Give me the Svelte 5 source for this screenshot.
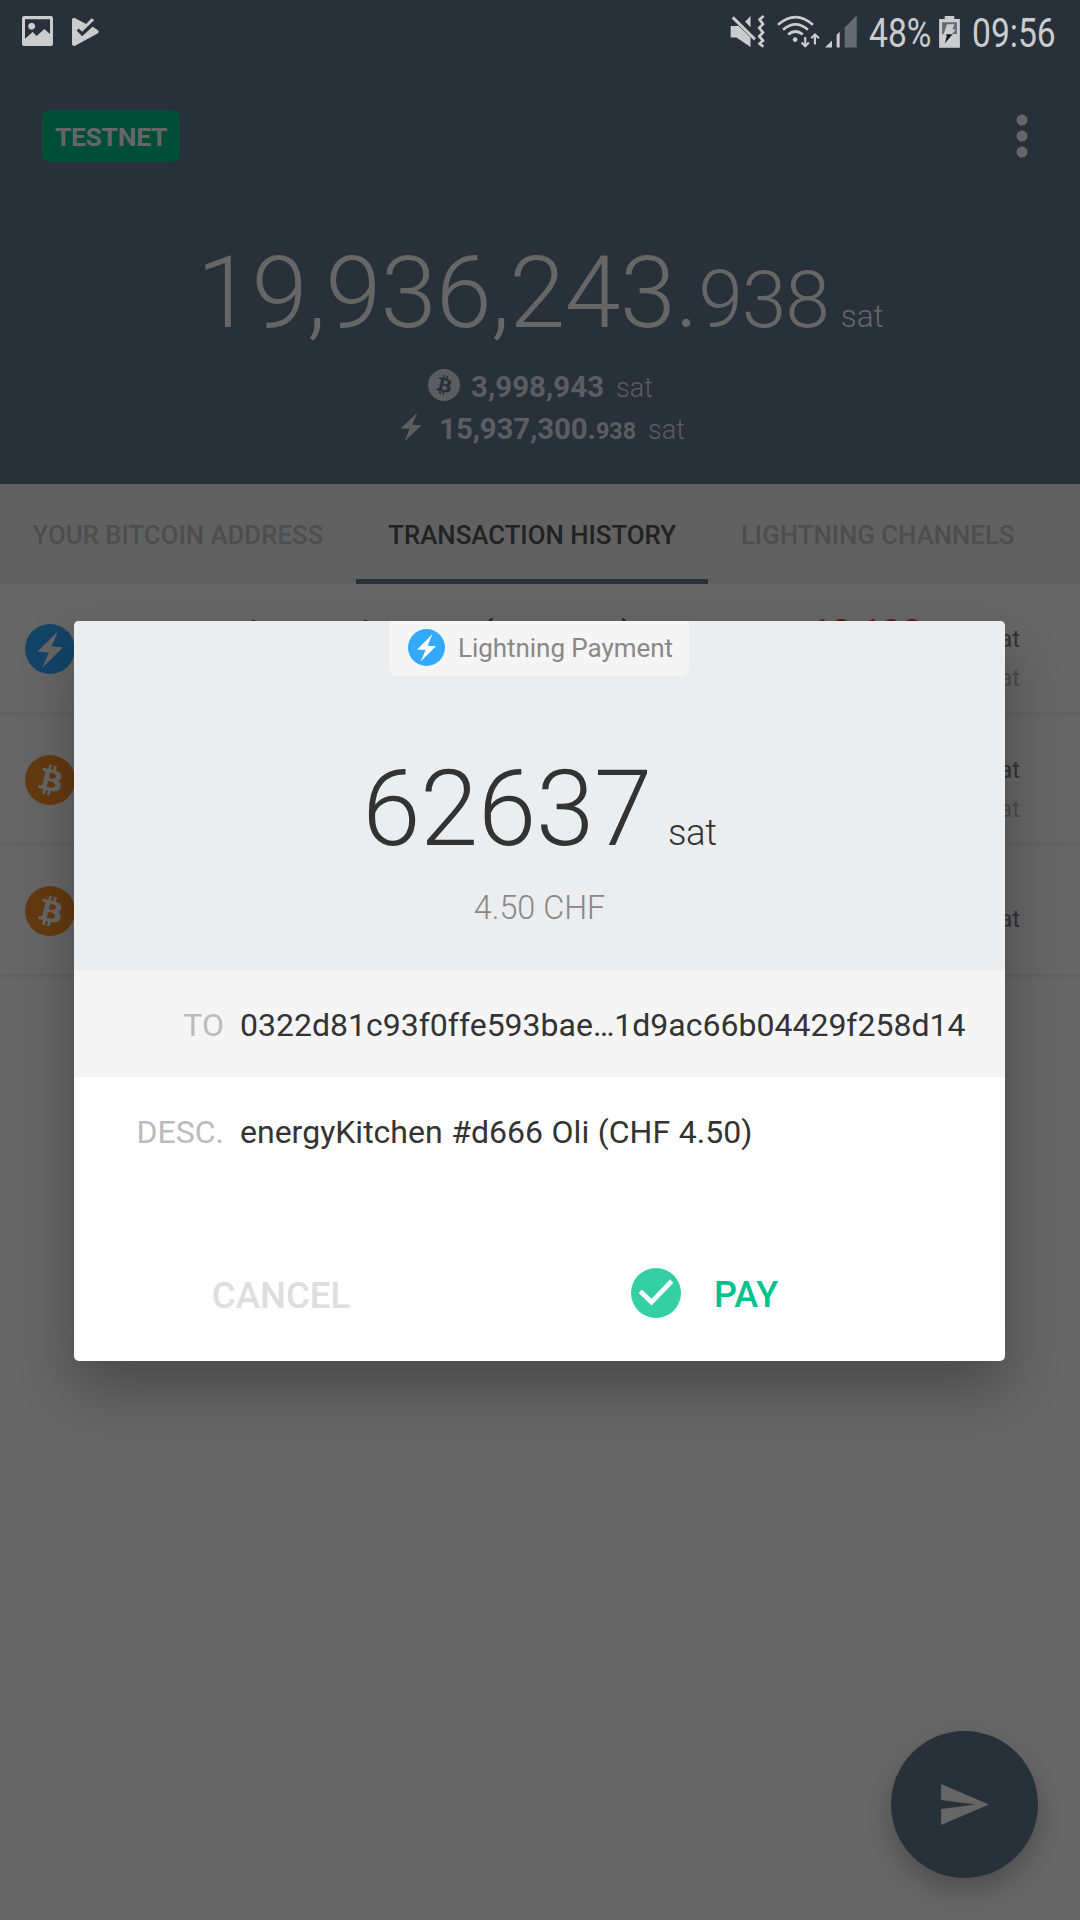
<script>
  const tabs = [
    { label: 'YOUR BITCOIN ADDRESS', active: false },
    { label: 'TRANSACTION HISTORY', active: true },
    { label: 'LIGHTNING CHANNELS', active: false },
  ];
  const transactions = [
    { kind: 'bolt', title: 'energyKitchen #e5b2 Marc (CHF 4.50)', amount: '12,100', fee: true },
    { kind: 'coin', title: '', amount: '', fee: true },
    { kind: 'coin', title: '', amount: '', fee: false },
  ];
  const details = [
    { label: 'TO', value: '0322d81c93f0ffe593bae…1d9ac66b04429f258d14' },
    { label: 'DESC.', value: 'energyKitchen #d666 Oli (CHF 4.50)' },
  ];
  const coin =
    'M23.189 14.02c.314-2.096-1.283-3.223-3.465-3.975l.708-2.84-1.728-.43-.69 2.765c-.454-.114-.92-.22-1.385-.326l.695-2.783L15.596 6l-.708 2.839c-.376-.086-.746-.17-1.104-.26l.002-.009-2.384-.595-.46 1.846s1.283.294 1.256.312c.7.175.826.638.805 1.006l-.806 3.235c.048.012.11.03.18.057l-.183-.045-1.13 4.532c-.086.212-.303.531-.793.41.018.025-1.256-.313-1.256-.313l-.858 1.978 2.25.561c.418.105.828.215 1.231.318l-.715 2.872 1.727.43.708-2.84c.472.127.93.245 1.378.357l-.706 2.828 1.728.43.715-2.866c2.948.558 5.164.333 6.097-2.333.752-2.146-.037-3.385-1.588-4.192 1.13-.26 1.98-1.003 2.207-2.538zm-3.95 5.538c-.533 2.147-4.148.986-5.32.695l.95-3.805c1.172.293 4.929.872 4.37 3.11zm.535-5.569c-.487 1.953-3.495.96-4.47.717l.86-3.45c.975.243 4.118.696 3.61 2.733z';
  const bolt = 'M21.1 4.6L17 14.4l7.2.5L11 28.1l4.2-9.9-7.3-.5z';
</script>

<div class="screen">
  <header>
    <div class="status">
      <svg class="s-img" viewBox="66 48 93 90"><path fill-rule="evenodd" d="M72 48h81q6 0 6 6v78q0 6-6 6H72q-6 0-6-6V54q0-6 6-6zM75 58v58l23-20 12 12 23-21 17 15V58zM95 68a10.500 10.500 0 1 1-.1 0z" /></svg>
      <svg class="s-play" viewBox="216 50 80 86"><path d="M216 57q2-6 8-4l34 18 16-17 8 5-36 35-10-10-6 6 16 17 31-28 16 10q5 4 0 9l-68 37q-7 3-9-4z" /></svg>
      <span class="grow"></span>
      <svg class="s-mute" viewBox="86 46 104 98">
        <path d="M88 79h18l5-1 36 35v28l-42-28H88zM147 49v33l-16-16z" />
        <path d="M94 53l66 65" stroke="#cbccce" stroke-width="9" />
        <path d="M186 49l-12 10 10 14-11 11 11 14-11 11 11 13-10 9 11 9" fill="none" stroke="#cbccce" stroke-width="8" />
      </svg>
      <svg class="s-wifi" viewBox="230 44 128 98" fill="none" stroke="#cbccce" stroke-width="8">
        <path d="M233 73q52-46 104 0M248 88q37-32 74 0M263 102q22-18 44 0" />
        <circle cx="284" cy="117" r="7" fill="#cbccce" stroke="none" />
        <path d="M314 109v26M303 126l11 11 11-11M343 132v-28M332 113l11-11 12 11" stroke-width="6.500" />
      </svg>
      <svg class="s-signal" viewBox="373 46 96 98"><path d="M373 143l21-21v21zM408 105l9-9v47h-9z" /><path d="M432 83l36-36v96h-36z" fill="#666b73" /></svg>
      <span class="cond pct"><b>48%</b></span>
      <svg class="s-bat" viewBox="717 47 63 97"><path d="M734 47h29v9h17v87h-63V56h17z" /><path d="M726 66h45v36h-45z" fill="#666b73" /><path d="M741 72h22l-5 16h10l-14 16h-24z" /><path d="M738 102h20l-24 28 6-21z" fill="#1b1f25" /></svg>
      <span class="cond time"><b>09:56</b></span>
    </div>
    <div class="toolbar">
      <span class="net">TESTNET</span>
      <svg class="menu" viewBox="0 0 12 44"><circle cx="6" cy="6" r="5.500" /><circle cx="6" cy="22" r="5.500" /><circle cx="6" cy="38" r="5.500" /></svg>
    </div>
    <div class="balance">19,936,243.<span class="milli">938</span><span class="unit">sat</span></div>
    <div class="sub">
      <svg class="sub-coin" viewBox="0 0 32 32"><circle cx="16" cy="16" r="16" /><path d={coin} fill="#283039" /></svg>
      <strong>3,998,943</strong><span>sat</span>
    </div>
    <div class="sub second">
      <svg class="sub-bolt" viewBox="0 0 22 30"><path d="M17.500 .5L12.200 12.800l9.600.4L4.500 29.500l5.100-12.700L.5 16.500z" /></svg>
      <strong>15,937,300.<small>938</small></strong><span>sat</span>
    </div>
  </header>

  <nav>
    {#each tabs as tab}
      <div class="tab" class:active={tab.active}>{tab.label}</div>
    {/each}
  </nav>

  <main>
    {#each transactions as tx}
      <div class="tx">
        <svg class="tx-icon" viewBox="0 0 32 32">
          <circle cx="16" cy="16" r="16" fill={tx.kind === 'bolt' ? '#144467' : '#633a11'} />
          <path d={tx.kind === 'bolt' ? bolt : coin} fill="#666" />
        </svg>
        <div class="tx-title">{tx.title}</div>
        <div class="tx-right">
          <div class="tx-amount"><em>{tx.amount}</em>sat</div>
          {#if tx.fee}<div class="tx-fee">sat</div>{/if}
        </div>
      </div>
    {/each}
  </main>

  <div class="fab"><svg viewBox="2 3 21 18"><path d="M2 21L23 12 2 3v7l15 2-15 2z" /></svg></div>

  <section class="dialog">
    <div class="head">
      <div class="type">
        <svg viewBox="0 0 32 32"><circle cx="16" cy="16" r="16" fill="#33aaff" /><path d={bolt} fill="#fff" /></svg>
        <span>Lightning Payment</span>
      </div>
      <div class="amount">62637<span>sat</span></div>
      <div class="fiat">4.50 CHF</div>
    </div>
    {#each details as row}
      <div class="detail"><span class="label">{row.label}</span><span class="value">{row.value}</span></div>
    {/each}
    <div class="actions">
      <div class="cancel">CANCEL</div>
      <div class="pay">
        <svg viewBox="0 0 50 50"><circle cx="25" cy="25" r="25" fill="#34cfa3" /><path d="M9.300 23.300L20.500 34.200 40.700 13.200" fill="none" stroke="#fff" stroke-width="4.700" /></svg>
        <span>PAY</span>
      </div>
    </div>
  </section>
</div>

<style>
  .screen {
    position: relative;
    width: 1080px;
    height: 1920px;
    overflow: hidden;
    background: #666;
    font-family: Roboto, 'Liberation Sans', sans-serif;
    color: #222;
  }
  svg { display: block; flex: none; }
  header { height: 484px; background: #283039; color: #666; }

  .status { display: flex; height: 60px; padding: 0 21px 0 22px; fill: #cbccce; color: #cbccce; }
  .status svg { overflow: visible; }
  .grow { flex: 1; }
  .s-img { width: 31px; height: 30px; margin-top: 16px; }
  .s-play { width: 27px; height: 29px; margin: 17px 0 0 19px; }
  .s-mute { width: 35px; height: 33px; margin-top: 15px; }
  .s-wifi { width: 43px; height: 33px; margin: 15px 0 0 12px; }
  .s-signal { width: 32px; height: 33px; margin: 15px 0 0 5px; }
  .s-bat { width: 21px; height: 32px; margin: 16px 0 0 8px; }
  .cond { font-size: 41px; line-height: 67px; }
  .cond b { display: block; font-weight: 400; transform: scaleX(.82); transform-origin: 0 0; white-space: nowrap; }
  .pct { width: 62px; margin-left: 12px; }
  .time { width: 87px; margin-left: 12px; }

  .toolbar { display: flex; align-items: center; justify-content: space-between; height: 152px; padding: 0 52px 0 42px; }
  .net { width: 138px; height: 52px; border-radius: 8px; background: #004d38; font-size: 26.500px; font-weight: 700; letter-spacing: -.3px; line-height: 53px; text-align: center; }
  .menu { width: 12px; height: 44px; fill: #666; }

  .balance { height: 120px; margin-top: 21px; font-size: 101px; font-weight: 300; letter-spacing: -.85px; line-height: 120px; text-align: center; white-space: nowrap; }
  .milli { font-size: 80.500px; letter-spacing: -1.1px; line-height: 0; }
  .unit { margin-left: 12px; font-size: 31.500px; letter-spacing: -.1px; line-height: 0; }
  .sub { display: flex; justify-content: center; height: 42px; margin-top: 13px; line-height: 42px; color: #5b5d61; fill: #5b5d61; }
  .second { margin-top: 0; padding-left: 5px; }
  .sub strong { font-size: 29.500px; font-weight: 700; }
  .second strong { letter-spacing: -.15px; }
  .sub small { font-size: 23.500px; line-height: 0; }
  .sub span { margin-left: 12px; font-size: 27px; font-weight: 300; line-height: 44px; }
  .sub-coin { width: 32px; height: 32px; margin: 3px 11px 0 1px; }
  .sub-bolt { width: 22px; height: 30px; margin: 4px 17px 0 0; }

  nav { display: flex; height: 100px; background: #616161; overflow: hidden; }
  .tab { box-sizing: border-box; flex: none; height: 100px; padding: 0 32.500px; border-bottom: 5px solid transparent; font-size: 25.800px; font-weight: 500; line-height: 102px; color: #4d4d4d; white-space: nowrap; }
  .active { border-color: #283039; color: #222; }

  .tx { box-sizing: border-box; display: flex; height: 131px; padding: 40px 60px 0 25px; border-bottom: 3px solid #616161; }
  .tx-icon { width: 50px; height: 50px; }
  .tx-title { flex: 1; margin: -8px 0 0 29px; font-size: 31.500px; letter-spacing: -.2px; line-height: 34px; color: #1c1c1c; white-space: nowrap; }
  .tx-right { margin-top: -4px; text-align: right; font-size: 23.500px; line-height: 39px; color: #333; }
  .tx-amount { height: 39px; }
  .tx-amount em { position: relative; top: -2px; margin-right: 65px; font-size: 36px; font-style: normal; font-weight: 700; line-height: 0; color: #6b0f14; }
  .tx-fee { color: #4b4b4b; }
  .tx:last-child .tx-right { margin-top: 14px; }

  .fab { position: absolute; left: 891px; top: 1731px; display: flex; width: 147px; height: 147px; border-radius: 50%; background: #283039; box-shadow: 0 12px 26px rgba(0, 0, 0, .24); }
  .fab svg { width: 48px; height: 41px; margin: 53px 0 0 50px; fill: #666; }

  .dialog { position: absolute; left: 74px; top: 621px; width: 931px; height: 740px; border-radius: 5px; overflow: hidden; background: #fff; box-shadow: 0 28px 56px rgba(0, 0, 0, .28); color: #333; }
  .head { height: 349px; background: #ebedee; }
  .type { display: flex; width: 300px; height: 55px; margin-left: 315px; border-radius: 0 0 8px 8px; background: #f5f5f5; font-size: 26px; letter-spacing: -.05px; line-height: 55px; color: #888; }
  .type svg { width: 37px; height: 37px; margin: 8px 13px 0 19px; }
  .amount { height: 120px; margin-top: 74px; font-size: 105px; font-weight: 300; letter-spacing: -.3px; line-height: 120px; text-align: center; }
  .amount span { margin-left: 16px; font-size: 36.500px; line-height: 0; }
  .fiat { margin-top: 18px; font-size: 32.300px; font-weight: 300; line-height: 40px; text-align: center; color: #888; }
  .detail { display: flex; height: 107px; font-size: 32px; line-height: 110px; white-space: nowrap; word-spacing: .7px; }
  .detail:nth-child(2) { background: #f5f5f5; }
  .label { width: 150px; margin-right: 16px; text-align: right; color: #bbb; }
  .actions { display: flex; height: 132px; margin-top: 45px; font-size: 36px; font-weight: 500; line-height: 132px; }
  .cancel { width: 414px; font-size: 36.600px; line-height: 133px; text-align: center; color: #dedede; }
  .pay { display: flex; align-items: center; margin-left: 143px; color: #00c28c; }
  .pay svg { width: 50px; height: 50px; margin: 0 33px 4px 0; }
</style>
